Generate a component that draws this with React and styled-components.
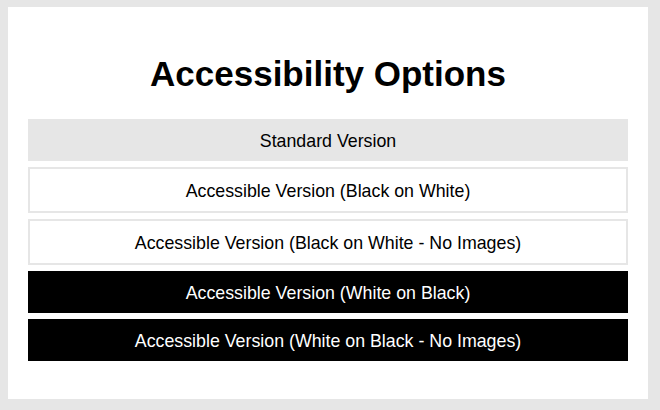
import React from "react";
import styled, { createGlobalStyle } from "styled-components";

const GlobalStyle = createGlobalStyle`
  html, body {
    margin: 0;
    padding: 0;
    background: #e6e6e6;
    font-family: "Liberation Sans", Arial, sans-serif;
  }
`;

const options = [
  { label: "Standard Version", variant: "standard" },
  { label: "Accessible Version (Black on White)", variant: "light" },
  { label: "Accessible Version (Black on White - No Images)", variant: "light" },
  { label: "Accessible Version (White on Black)", variant: "dark" },
  { label: "Accessible Version (White on Black - No Images)", variant: "dark" },
];

const App = () => {
  return (
    <Page>
      <GlobalStyle />
      <Card>
        <Title>Accessibility Options</Title>
        <OptionList>
          {options.map((o) => (
            <Option key={o.label} href="#" $variant={o.variant}>
              {o.label}
            </Option>
          ))}
        </OptionList>
      </Card>
    </Page>
  );
};

export default App;

const Page = styled.div`
  padding: 7px 12px 11px 8px;
`;

const Card = styled.div`
  width: 640px;
  height: 392px;
  box-sizing: border-box;
  background: #fff;
  padding: 0 20px 38px;
`;

const Title = styled.h1`
  margin: 0;
  padding: 47px 0 25px;
  font-size: 35px;
  line-height: 40px;
  font-weight: bold;
  text-align: center;
  color: #000;
`;

const OptionList = styled.div`
  display: flex;
  flex-direction: column;
  gap: 6px;
`;

const Option = styled.a`
  display: flex;
  align-items: center;
  justify-content: center;
  box-sizing: border-box;
  height: ${(p) => (p.$variant === "light" ? "46px" : "42px")};
  padding-top: 3px;
  font-size: 17.8px;
  text-decoration: none;
  color: ${(p) => (p.$variant === "dark" ? "#fff" : "#000")};
  background: ${(p) =>
    p.$variant === "standard" ? "#e6e6e6" : p.$variant === "dark" ? "#000" : "#fff"};
  border: ${(p) => (p.$variant === "light" ? "2px solid #e6e6e6" : "none")};
`;
